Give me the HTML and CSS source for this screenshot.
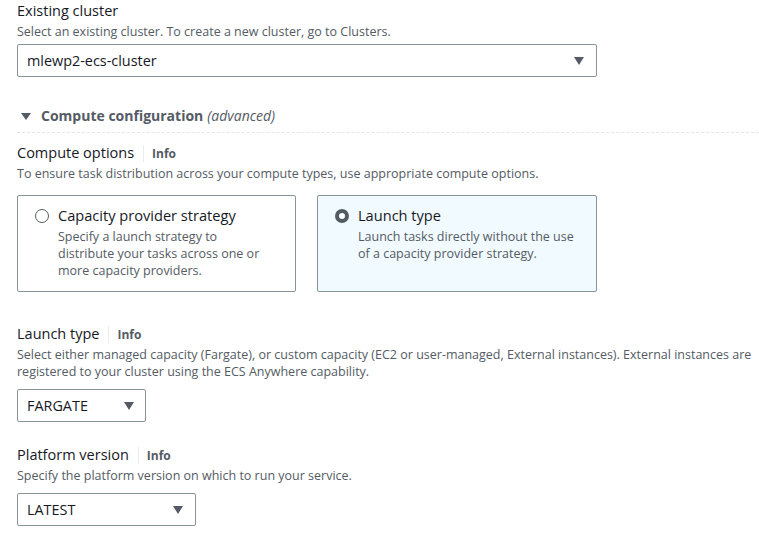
FILE: index.html
```html
<!DOCTYPE html>
<html>
<head>
<meta charset="utf-8">
<link rel="stylesheet" href="styles.css">
</head>
<body>
<div class="page">
  <section class="field first">
    <div class="label">Existing cluster</div>
    <div class="desc">Select an existing cluster. To create a new cluster, go to Clusters.</div>
    <div class="select wide">
      <span class="value">mlewp2-ecs-cluster</span>
      <span class="caret"></span>
    </div>
  </section>

  <div class="expander">
    <span class="tri"></span>
    <span class="exp-title">Compute configuration</span>
    <span class="exp-adv">(advanced)</span>
  </div>

  <section class="field compute">
    <div class="label">Compute options <span class="info">Info</span></div>
    <div class="desc">To ensure task distribution across your compute types, use appropriate compute options.</div>
    <div class="tiles">
      <div class="tile">
        <span class="radio"></span>
        <div class="tile-body">
          <div class="tile-title">Capacity provider strategy</div>
          <div class="tile-desc">Specify a launch strategy to distribute your tasks across one or more capacity providers.</div>
        </div>
      </div>
      <div class="tile selected">
        <span class="radio on"></span>
        <div class="tile-body">
          <div class="tile-title">Launch type</div>
          <div class="tile-desc">Launch tasks directly without the use of a capacity provider strategy.</div>
        </div>
      </div>
    </div>
  </section>

  <section class="field launch">
    <div class="label">Launch type <span class="info">Info</span></div>
    <div class="desc">Select either managed capacity (Fargate), or custom capacity (EC2 or user-managed, External instances). External instances are registered to your cluster using the ECS Anywhere capability.</div>
    <div class="select fargate">
      <span class="value">FARGATE</span>
      <span class="caret"></span>
    </div>
  </section>

  <section class="field platform">
    <div class="label">Platform version <span class="info">Info</span></div>
    <div class="desc">Specify the platform version on which to run your service.</div>
    <div class="select latest">
      <span class="value">LATEST</span>
      <span class="caret"></span>
    </div>
  </section>
</div>
</body>
</html>
```

FILE: styles.css
```css
* { box-sizing: border-box; }
html, body { margin: 0; padding: 0; background: #fff; }
body {
  font-family: "Open Sans", "Noto Sans", sans-serif;
  color: #16191f;
  width: 759px;
  height: 535px;
  overflow: hidden;
}
.page {
  padding: 1px 0 0 17px;
}
.label {
  font-size: 14.5px;
  line-height: 20px;
  color: #16191f;
  display: flex;
  align-items: center;
}
.info {
  font-size: 12px;
  font-weight: 700;
  color: #545b64;
  margin-left: 9px;
  padding-left: 8px;
  border-left: 1px solid #eaeded;
  line-height: 17px;
}
.desc {
  margin-top: 2px;
  font-size: 12.5px;
  line-height: 17px;
  color: #545b64;
}
.select {
  margin-top: 4px;
  height: 33px;
  border: 1px solid #879596;
  border-radius: 2px;
  display: flex;
  align-items: center;
  justify-content: space-between;
  padding: 0 12px 0 9px;
  font-size: 14.4px;
  color: #16191f;
}
.select.wide { width: 580px; }
.select.fargate { width: 129px; padding-right: 11px; }
.select.latest { width: 179px; }
.caret {
  width: 0; height: 0;
  border-left: 5.5px solid transparent;
  border-right: 5.5px solid transparent;
  border-top: 8px solid #545b64;
}
.expander {
  margin-top: 29px;
  padding: 0 0 6px 4px;
  display: flex;
  align-items: center;
  font-size: 14px;
  line-height: 20px;
  border-bottom: 1px dashed #e1e7ea;
}
.tri {
  width: 0; height: 0;
  border-left: 5px solid transparent;
  border-right: 5px solid transparent;
  border-top: 7px solid #545b64;
  margin-right: 10px;
}
.exp-title { font-weight: 700; color: #545b64; }
.exp-adv { font-style: italic; color: #545b64; margin-left: 4px; }
.field.compute { margin-top: 10px; }
.tiles {
  margin-top: 13px;
  display: flex;
  gap: 21px;
}
.tile {
  width: 279px;
  height: 97px;
  border: 1px solid #879596;
  border-radius: 2px;
  padding: 9px 0 0 17px;
  display: flex;
  align-items: flex-start;
  gap: 9px;
}
.tile.selected { width: 280px; background: #f1faff; }
.tile-body { width: 217px; }
.radio {
  flex: none;
  width: 14px; height: 14px;
  border-radius: 50%;
  border: 1px solid #545b64;
  margin-top: 4px;
}
.radio.on { border: 4px solid #545b64; background: #fff; }
.tile-title { font-size: 14.6px; line-height: 20px; }
.tile-desc { margin-top: 2.5px; font-size: 12.5px; line-height: 17px; color: #545b64; }
.field.launch { margin-top: 32px; }
.field.launch .select { margin-top: 9px; }
.field.platform { margin-top: 23px; }
.field.platform .select { margin-top: 9px; }
```
